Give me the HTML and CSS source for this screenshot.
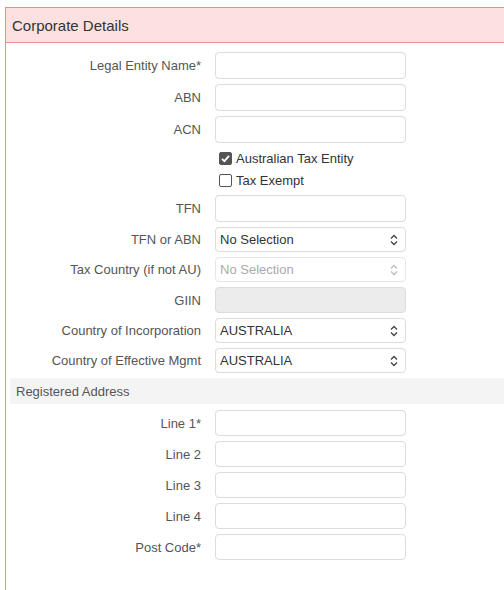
FILE: index.html
```html
<!DOCTYPE html>
<html>
<head>
<meta charset="utf-8">
<link rel="stylesheet" href="styles.css">
</head>
<body>
<div class="panel">
  <div class="panel-heading">Corporate Details</div>
  <div class="panel-body">
    <div class="row"><label class="lbl">Legal Entity Name*</label><div class="input"></div></div>
    <div class="row"><label class="lbl">ABN</label><div class="input"></div></div>
    <div class="row"><label class="lbl">ACN</label><div class="input"></div></div>
    <div class="checks">
      <div class="check"><span class="box checked"><svg width="13" height="13" viewBox="0 0 13 13"><path d="M3 6.8 L5.4 9.2 L10 3.8" fill="none" stroke="#fff" stroke-width="1.8"/></svg></span>Australian Tax Entity</div>
      <div class="check"><span class="box"></span>Tax Exempt</div>
    </div>
    <div class="row"><label class="lbl">TFN</label><div class="input"></div></div>
    <div class="row"><label class="lbl">TFN or ABN</label><div class="select"><span>No Selection</span><svg class="arr" width="8" height="12" viewBox="0 0 8 12"><path d="M1 4.5 L4 1.5 L7 4.5 M1 7.5 L4 10.5 L7 7.5" fill="none" stroke="#444" stroke-width="1.3"/></svg></div></div>
    <div class="row"><label class="lbl">Tax Country (if not AU)</label><div class="select disabled"><span>No Selection</span><svg class="arr" width="8" height="12" viewBox="0 0 8 12"><path d="M1 4.5 L4 1.5 L7 4.5 M1 7.5 L4 10.5 L7 7.5" fill="none" stroke="#bbb" stroke-width="1.3"/></svg></div></div>
    <div class="row"><label class="lbl">GIIN</label><div class="input readonly"></div></div>
    <div class="row"><label class="lbl">Country of Incorporation</label><div class="select"><span>AUSTRALIA</span><svg class="arr" width="8" height="12" viewBox="0 0 8 12"><path d="M1 4.5 L4 1.5 L7 4.5 M1 7.5 L4 10.5 L7 7.5" fill="none" stroke="#444" stroke-width="1.3"/></svg></div></div>
    <div class="row"><label class="lbl">Country of Effective Mgmt</label><div class="select"><span>AUSTRALIA</span><svg class="arr" width="8" height="12" viewBox="0 0 8 12"><path d="M1 4.5 L4 1.5 L7 4.5 M1 7.5 L4 10.5 L7 7.5" fill="none" stroke="#444" stroke-width="1.3"/></svg></div></div>
    <div class="section">Registered Address</div>
    <div class="row"><label class="lbl">Line 1*</label><div class="input short"></div></div>
    <div class="row"><label class="lbl">Line 2</label><div class="input short"></div></div>
    <div class="row"><label class="lbl">Line 3</label><div class="input short"></div></div>
    <div class="row"><label class="lbl">Line 4</label><div class="input short"></div></div>
    <div class="row"><label class="lbl">Post Code*</label><div class="input short"></div></div>
  </div>
</div>
</body>
</html>
```
FILE: styles.css
```css
html, body {
  overflow: hidden;
}
body {
  margin: 7px 0 0 5px;
  background: #fff;
  font-family: "Liberation Sans", Arial, sans-serif;
  color: #333;
}
.panel {
  border: 1px solid #ea8f8f;
  border-right: none;
  border-bottom: none;
  margin-right: -20px;
  min-height: 583px;
  box-sizing: border-box;
}
.panel-heading {
  background: #fde1e1;
  border-bottom: 1px solid #ea8f8f;
  height: 35px;
  box-sizing: border-box;
  padding: 0 0 0 6px;
  display: flex;
  align-items: center;
  font-size: 15px;
  color: #333;
}
.panel-body {
  padding-top: 9px;
}
.row {
  display: flex;
  align-items: center;
  margin-bottom: 5px;
}
.lbl {
  width: 195px;
  text-align: right;
  font-size: 13px;
  color: #555;
  flex: none;
}
.input, .select {
  margin-left: 14px;
  width: 191px;
  box-sizing: border-box;
  border: 1px solid #dcdcdc;
  border-radius: 4px;
  height: 27px;
  background: #fff;
  flex: none;
}
.input.short {
  height: 26px;
}
.input.readonly {
  background: #ececec;
  height: 26px;
}
.select {
  height: 25px;
  display: flex;
  align-items: center;
  justify-content: space-between;
  padding: 0 7px 0 4px;
  font-size: 13px;
  color: #333;
}
.select.disabled {
  color: #aaa;
  border-color: #e6e6e6;
}
.arr {
  display: block;
}
.checks {
  margin: -1px 0 4px 213px;
}
.check {
  display: flex;
  align-items: center;
  height: 22px;
  font-size: 13px;
  color: #333;
}
.box {
  width: 13px;
  height: 13px;
  box-sizing: border-box;
  border: 1px solid #555;
  border-radius: 2px;
  margin-right: 4px;
  background: #fff;
  display: flex;
  align-items: center;
  justify-content: center;
}
.box.checked {
  background: #555;
  border-color: #555;
}
.box svg {
  display: block;
  flex: none;
}
.section {
  margin: 0 0 6px 4px;
  background: #f4f4f4;
  height: 26px;
  display: flex;
  align-items: center;
  padding-left: 6px;
  font-size: 13px;
  color: #555;
}
```
